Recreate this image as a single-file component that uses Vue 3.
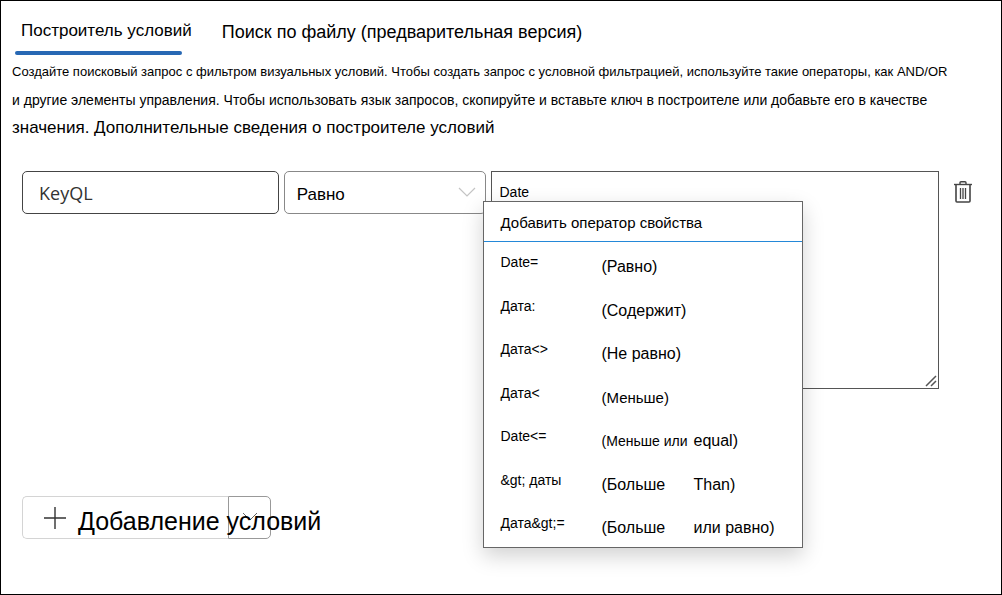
<script setup>
import { ref } from 'vue'

const tabs = [
  { id: 'builder', label: 'Построитель условий' },
  { id: 'file', label: 'Поиск по файлу (предварительная версия)' }
]
const activeTab = ref('builder')

const property = ref('KeyQL')
const operator = ref('Равно')
const query = ref('Date')

const operators = [
  { code: 'Date=', words: ['(Равно)'] },
  { code: 'Дата:', words: ['(Содержит)'] },
  { code: 'Дата<>', words: ['(Не равно)'] },
  { code: 'Дата<', words: ['(Меньше)'], medium: true },
  { code: 'Date<=', words: ['(Меньше или', 'equal)'], small: true },
  { code: '&gt; даты', words: ['(Больше', 'Than)'] },
  { code: 'Дата&gt;=', words: ['(Больше', 'или равно)'] }
]
</script>

<template>
  <main class="page">
    <nav class="tabs" role="tablist">
      <button
        v-for="tab in tabs"
        :key="tab.id"
        type="button"
        role="tab"
        class="tab"
        :class="{ 'tab--active': tab.id === activeTab }"
        :aria-selected="tab.id === activeTab"
        @click="activeTab = tab.id"
      >
        {{ tab.label }}
      </button>
    </nav>

    <p class="intro">
      <span class="intro__line">Создайте поисковый запрос с фильтром визуальных условий. Чтобы создать запрос с условной фильтрацией, используйте такие операторы, как AND/OR</span>
      <span class="intro__line intro__line--second">и другие элементы управления. Чтобы использовать язык запросов, скопируйте и вставьте ключ в построителе или добавьте его в качестве</span>
      <span class="intro__line intro__line--large">значения. Дополнительные сведения о построителе условий</span>
    </p>

    <div class="condition">
      <input v-model="property" class="property" type="text" aria-label="KeyQL" />

      <div class="operator">
        <select v-model="operator" class="operator__select" aria-label="Равно">
          <option>Равно</option>
        </select>
        <svg class="operator__arrow" width="18" height="10" viewBox="0 0 18 10" aria-hidden="true">
          <path d="M1 1l8 8 8-8" fill="none" stroke="#c4c4c4" stroke-width="1.2" />
        </svg>
      </div>

      <div class="value">
        <textarea v-model="query" class="value__text" aria-label="Date"></textarea>
        <svg class="value__grip" width="12" height="12" viewBox="0 0 12 12" aria-hidden="true">
          <path d="M1 11L11 1M6 11l5-5" fill="none" stroke="#555" stroke-width="1.5" />
        </svg>

        <div class="menu">
          <div class="menu__header">Добавить оператор свойства</div>
          <div class="menu__list">
            <button v-for="item in operators" :key="item.code" type="button" class="menu__item">
              <span class="menu__code">{{ item.code }}</span>
              <span
                v-for="(word, index) in item.words"
                :key="word"
                class="menu__word"
                :class="{
                  'menu__word--small': item.small && index === 0,
                  'menu__word--medium': item.medium
                }"
              >{{ word }}</span>
            </button>
          </div>
        </div>
      </div>

      <button type="button" class="remove" aria-label="Удалить">
        <svg width="18" height="22" viewBox="0 0 18 22" fill="none" stroke="#444">
          <path d="M0 3.5h18" stroke-width="1.4" />
          <path d="M6 3V1.8Q6 .8 7 .8h4q1 0 1 1V3" stroke-width="1.4" />
          <path d="M2 4v16q0 1 1 1h12q1 0 1-1V4" stroke-width="1.6" />
          <path d="M6.500 7v11M9 7v11M11.500 7v11" stroke-width="1.3" />
        </svg>
      </button>
    </div>

    <div class="add">
      <button type="button" class="add__main">
        <svg width="22" height="22" viewBox="0 0 22 22" aria-hidden="true">
          <path d="M11 0v22M0 11h22" fill="none" stroke="#333" stroke-width="1.4" />
        </svg>
        <span class="add__label">Добавление условий</span>
      </button>
      <button type="button" class="add__more" aria-label="Добавление условий">
        <svg width="16" height="10" viewBox="0 0 16 10" aria-hidden="true">
          <path d="M1 1l7 7 7-7" fill="none" stroke="#666" />
        </svg>
      </button>
    </div>
  </main>
</template>

<style>
body {
  margin: 0;
}
</style>

<style scoped>
.page {
  box-sizing: border-box;
  min-height: 100vh;
  padding: 12px 0 48px 11px;
  border: 1px solid #000;
  background: #fff;
  color: #000;
  font-family: "Liberation Sans", Arial, sans-serif;
}

button,
input,
select,
textarea {
  box-sizing: border-box;
  margin: 0;
  color: inherit;
  font-family: inherit;
}

.tabs {
  display: flex;
  gap: 30px;
  padding-left: 3px;
}

.tab {
  position: relative;
  height: 42px;
  padding: 0 0 4px;
  border: 0;
  background: none;
  font-size: 18px;
  white-space: nowrap;
}

.tab--active {
  padding: 0 0 6px 6px;
  font-size: 17px;
}

.tab--active::after {
  content: "";
  position: absolute;
  right: 10px;
  bottom: 0;
  left: 0;
  height: 4px;
  border-radius: 2px;
  background: #2768b4;
}

.intro {
  margin: 3px 0 0;
}

.intro__line {
  display: block;
  font-size: 13px;
  line-height: 28px;
  white-space: nowrap;
}

.intro__line--second {
  font-size: 14px;
}

.intro__line--large {
  font-size: 17px;
}

.condition {
  display: grid;
  grid-template-columns: 257fr 203fr 458fr 18px;
  align-items: start;
  gap: 5px;
  margin-top: 29px;
  padding: 0 29px 0 10px;
}

.property {
  width: 100%;
  height: 43px;
  padding: 0 16px;
  border: 1px solid #444;
  border-radius: 5px;
  background: #fff;
  color: #333;
  font-family: "Open Sans", "Noto Sans", sans-serif;
  font-size: 18px;
}

.operator {
  position: relative;
}

.operator__select {
  width: 100%;
  height: 43px;
  padding: 3px 12px 0;
  border: 1px solid #888;
  border-radius: 5px;
  appearance: none;
  background: #fff;
  font-size: 17px;
}

.operator__arrow {
  position: absolute;
  top: 16px;
  right: 10px;
  pointer-events: none;
}

.value {
  position: relative;
  margin-right: 10px;
}

.value__text {
  display: block;
  width: 100%;
  height: 218px;
  padding: 10px 7px;
  border: 1px solid #555;
  border-radius: 0;
  background: #fff;
  font-size: 14px;
  line-height: 20px;
  resize: none;
}

.value__grip {
  position: absolute;
  right: 2px;
  bottom: 2px;
}

.menu {
  position: absolute;
  top: 30px;
  left: -8px;
  box-sizing: border-box;
  width: 320px;
  border: 1px solid #666;
  background: #fff;
  box-shadow: 0 8px 20px rgba(0, 0, 0, 0.18);
}

.menu__header {
  padding: 3px 16px 0;
  border-bottom: 1px solid #2488d8;
  font-size: 15px;
  line-height: 36px;
}

.menu__list {
  display: grid;
  grid-auto-rows: 1fr;
  height: 305px;
}

.menu__item {
  display: grid;
  grid-template-columns: 101px 92px 1fr;
  align-items: start;
  padding: 0 16px;
  border: 0;
  background: none;
  text-align: left;
  white-space: nowrap;
}

.menu__code {
  font-size: 14px;
  line-height: 40px;
}

.menu__word {
  padding-top: 8px;
  font-size: 16px;
  line-height: 34px;
}

.menu__word--medium {
  font-size: 15px;
}

.menu__word--small {
  font-size: 14px;
}

.remove {
  margin-top: 10px;
  padding: 0;
  border: 0;
  background: none;
  line-height: 0;
}

.add {
  display: flex;
  margin: 107px 0 0 10px;
}

.add__main {
  position: relative;
  z-index: 1;
  display: flex;
  align-items: center;
  gap: 12px;
  width: 206px;
  height: 43px;
  padding: 0 0 0 21px;
  border: 1px solid #d4d4d4;
  border-right: 0;
  border-radius: 5px 0 0 5px;
  background: none;
}

.add__main svg {
  flex: none;
}

.add__label {
  padding-top: 6px;
  font-size: 25px;
  line-height: 32px;
  white-space: nowrap;
}

.add__more {
  width: 43px;
  height: 43px;
  padding: 0;
  border: 1px solid #999;
  border-radius: 0 5px 5px 0;
  background: #fff;
}
</style>
